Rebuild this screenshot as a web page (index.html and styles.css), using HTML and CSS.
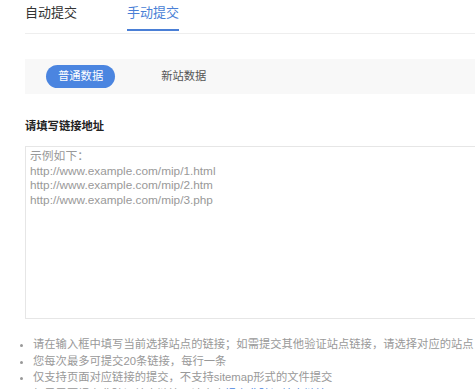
FILE: index.html
```html
<!DOCTYPE html>
<html lang="zh-CN">
<head>
<meta charset="utf-8">
<link rel="stylesheet" href="styles.css">
</head>
<body>
<div class="page">
  <div class="tabs">
    <div class="tab">自动提交</div>
    <div class="tab active">手动提交</div>
  </div>
  <div class="switch">
    <span class="pill on">普通数据</span>
    <span class="pill">新站数据</span>
  </div>
  <div class="label">请填写链接地址</div>
  <div class="area">示例如下：<br>http://www.example.com/mip/1.html<br>http://www.example.com/mip/2.htm<br>http://www.example.com/mip/3.php</div>
  <ul class="tips">
    <li>请在输入框中填写当前选择站点的链接；如需提交其他验证站点链接，请选择对应的站点</li>
    <li>您每次最多可提交20条链接，每行一条</li>
    <li>仅支持页面对应链接的提交，不支持sitemap形式的文件提交</li>
    <li>如果需要提交非验证站点链接，请点击<a class="link" href="#">提交非验证站点链接</a></li>
  </ul>
</div>
</body>
</html>
```
FILE: styles.css
```css
html, body {
  margin: 0;
  padding: 0;
  background: #fff;
  overflow: hidden;
}
body {
  font-family: "Liberation Sans", "Noto Sans CJK SC", sans-serif;
  color: #333;
}
.page {
  width: 700px;
  padding-left: 25px;
}
.tabs {
  display: flex;
  gap: 50px;
  border-bottom: 1px solid #eeeeee;
  height: 33px;
}
.tab {
  font-size: 13px;
  line-height: 16px;
  padding-top: 5px;
  height: 28px;
  box-sizing: border-box;
  color: #333;
}
.tab.active {
  color: #4a7fd6;
  border-bottom: 2px solid #4a7fd6;
  height: 31px;
}
.switch {
  margin-top: 25px;
  height: 35px;
  background: #f8f8f8;
  display: flex;
  align-items: center;
  padding-left: 21px;
  gap: 34px;
}
.pill {
  font-size: 11.3px;
  line-height: 23px;
  height: 23px;
  padding: 0 12px;
  border-radius: 12px;
  color: #555;
}
.pill.on {
  background: #4b85e0;
  color: #fff;
}
.label {
  margin-top: 25px;
  font-size: 11.3px;
  font-weight: bold;
  color: #222;
  line-height: 14px;
}
.area {
  margin-top: 13px;
  height: 173px;
  box-sizing: border-box;
  border: 1px solid #e6e6e6;
  padding: 2px 4px;
  font-size: 11.8px;
  line-height: 14.6px;
  color: #999;
}
.tips {
  margin: 17px 0 0;
  padding-left: 8px;
  font-size: 11.3px;
  line-height: 16.5px;
  color: #999;
  white-space: nowrap;
}
.link {
  color: #4b85e0;
  text-decoration: none;
}
```
